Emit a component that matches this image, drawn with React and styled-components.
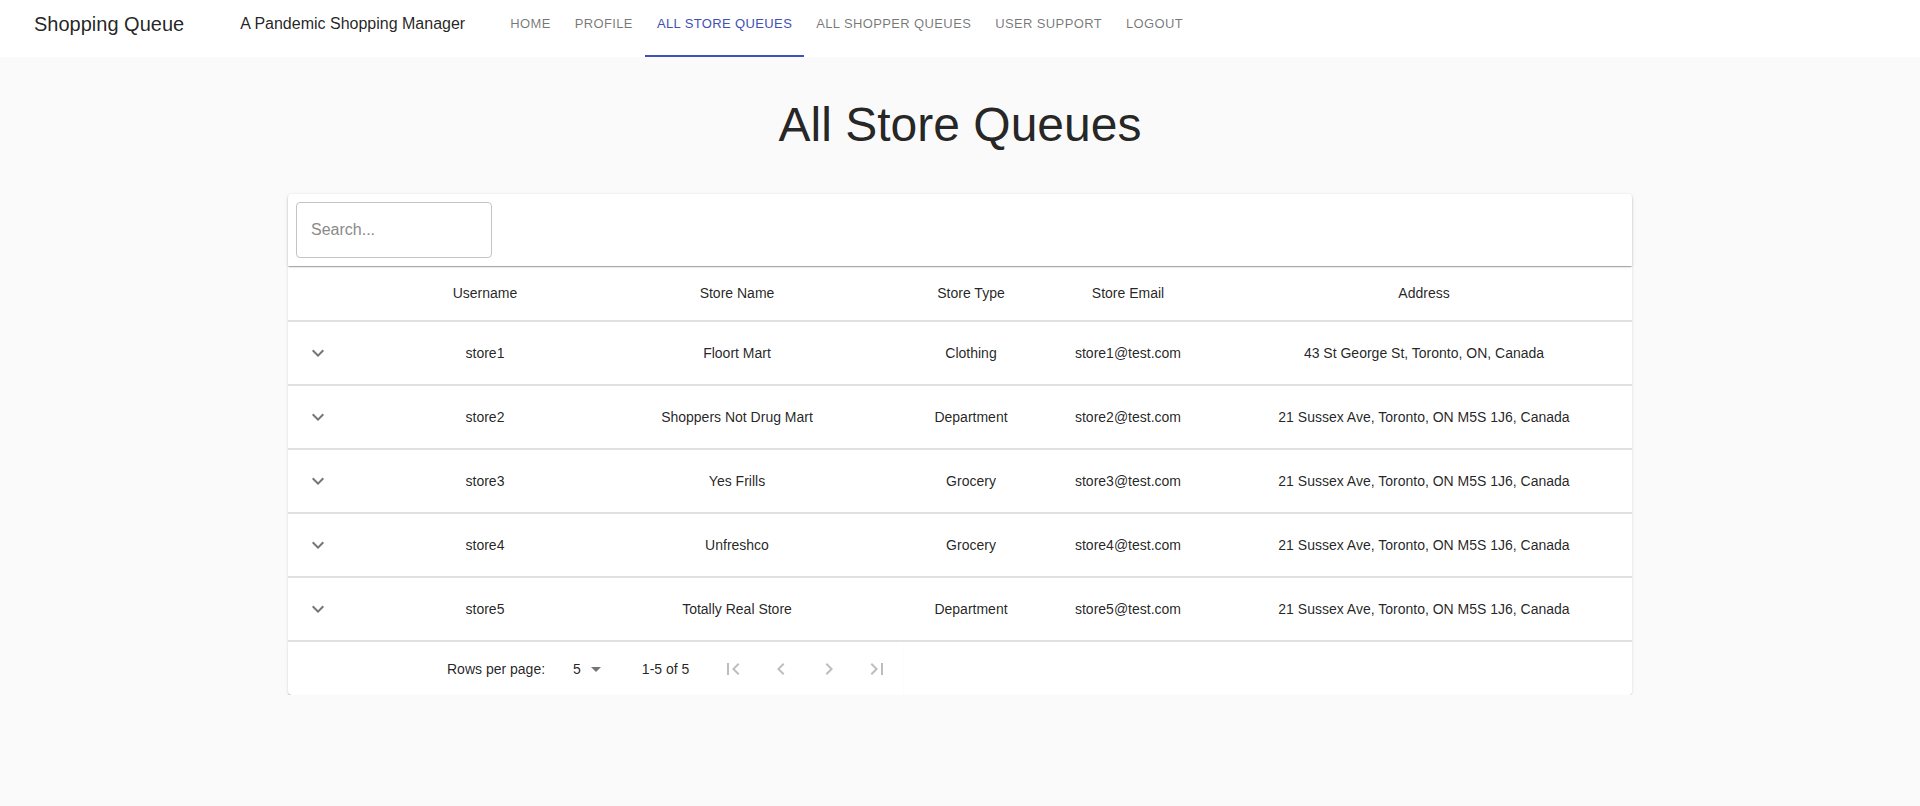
import React from 'react';
import styled, { createGlobalStyle, css } from 'styled-components';
import { MdExpandMore, MdFirstPage, MdChevronLeft, MdChevronRight, MdLastPage, MdArrowDropDown } from 'react-icons/md';

const GlobalStyle = createGlobalStyle`
  body {
    margin: 0;
    background: #fafafa;
    font-family: "Liberation Sans", Arial, sans-serif;
    color: rgba(0, 0, 0, 0.87);
  }
`;

const NavBar = styled.header`
  display: flex;
  align-items: flex-start;
  height: 57px;
  padding-left: 34px;
  background: #fff;
`;

const Brand = styled.div`
  font-size: 20px;
  line-height: 48px;
  margin-right: 56px;
`;

const Tagline = styled.div`
  font-size: 16px;
  line-height: 48px;
  margin-right: 33px;
`;

const Tabs = styled.nav`
  display: flex;
  height: 100%;
`;

const Tab = styled.div`
  padding: 0 12px;
  font-size: 13px;
  font-weight: 500;
  letter-spacing: 0.02857em;
  text-transform: uppercase;
  line-height: 48px;
  color: rgba(0, 0, 0, 0.54);
  cursor: pointer;
  ${(p) =>
    p.$active &&
    css`
      color: #3f51b5;
      box-shadow: inset 0 -2px 0 #3f51b5;
    `}
`;

const Main = styled.main`
  padding-top: 40px;
`;

const Title = styled.h1`
  margin: 0 0 41px;
  font-size: 48px;
  font-weight: 400;
  line-height: 56px;
  text-align: center;
`;

const Card = styled.section`
  width: 1344px;
  margin: 0 auto;
  background: #fff;
  border-radius: 4px;
  box-shadow: 0 1px 3px rgba(0, 0, 0, 0.12), 0 1px 1px rgba(0, 0, 0, 0.06);
`;

const Toolbar = styled.div`
  position: relative;
  z-index: 1;
  display: flex;
  align-items: center;
  height: 72px;
  padding: 0 8px;
  box-sizing: border-box;
  border-radius: 4px 4px 0 0;
  box-shadow: 0 2px 1px -1px rgba(0, 0, 0, 0.2), 0 1px 1px 0 rgba(0, 0, 0, 0.14), 0 1px 3px 0 rgba(0, 0, 0, 0.12);
`;

const Search = styled.input`
  width: 196px;
  height: 56px;
  box-sizing: border-box;
  padding: 0 14px;
  border: 1px solid #c4c4c4;
  border-radius: 4px;
  font: inherit;
  font-size: 16px;
  outline: none;
  &::placeholder {
    color: #8a8a8a;
  }
`;

const Row = styled.div`
  display: grid;
  grid-template-columns: 60px 274px 230px 238px 76px 1fr;
  align-items: center;
  height: ${(p) => (p.$head ? 56 : 64)}px;
  box-sizing: border-box;
  border-bottom: 2px solid #e0e0e0;
  font-size: 14px;
  font-weight: ${(p) => (p.$head ? 500 : 400)};
`;

const Cell = styled.div`
  display: flex;
  justify-content: center;
  white-space: nowrap;
  padding-left: ${(p) => p.$shift || 0}px;
`;

const ExpandIcon = styled(MdExpandMore)`
  font-size: 24px;
  color: rgba(0, 0, 0, 0.54);
`;

const Footer = styled.div`
  display: flex;
  height: 53px;
`;

const Pager = styled.div`
  display: flex;
  align-items: center;
  width: 615px;
  padding-left: 159px;
  box-sizing: border-box;
  font-size: 14px;
  border-radius: 0 0 0 4px;
  box-shadow: 0 2px 2px -1px rgba(0, 0, 0, 0.28);
`;

const Select = styled.div`
  display: flex;
  align-items: center;
  margin-left: 28px;
  svg {
    margin-left: 3px;
    font-size: 24px;
    color: rgba(0, 0, 0, 0.54);
  }
`;

const Count = styled.span`
  margin-left: 34px;
`;

const Nav = styled.div`
  display: flex;
  margin-left: 20px;
`;

const IconButton = styled.button`
  display: flex;
  align-items: center;
  justify-content: center;
  width: 48px;
  height: 48px;
  padding: 0;
  border: 0;
  background: none;
  font-size: 24px;
  color: rgba(0, 0, 0, 0.26);
`;

const tabs = ['Home', 'Profile', 'All Store Queues', 'All Shopper Queues', 'User Support', 'Logout'];

const stores = [
  ['store1', 'Floort Mart', 'Clothing', 'store1@test.com', '43 St George St, Toronto, ON, Canada'],
  ['store2', 'Shoppers Not Drug Mart', 'Department', 'store2@test.com', '21 Sussex Ave, Toronto, ON M5S 1J6, Canada'],
  ['store3', 'Yes Frills', 'Grocery', 'store3@test.com', '21 Sussex Ave, Toronto, ON M5S 1J6, Canada'],
  ['store4', 'Unfreshco', 'Grocery', 'store4@test.com', '21 Sussex Ave, Toronto, ON M5S 1J6, Canada'],
  ['store5', 'Totally Real Store', 'Department', 'store5@test.com', '21 Sussex Ave, Toronto, ON M5S 1J6, Canada'],
];

const headers = ['Username', 'Store Name', 'Store Type', 'Store Email', 'Address'];

const App = () => (
  <>
    <GlobalStyle />
    <NavBar>
      <Brand>Shopping Queue</Brand>
      <Tagline>A Pandemic Shopping Manager</Tagline>
      <Tabs>
        {tabs.map((t) => (
          <Tab key={t} $active={t === 'All Store Queues'}>
            {t}
          </Tab>
        ))}
      </Tabs>
    </NavBar>

    <Main>
      <Title>All Store Queues</Title>
      <Card>
        <Toolbar>
          <Search placeholder="Search..." />
        </Toolbar>

        <Row $head>
          <Cell />
          {headers.map((h, i) => (
            <Cell key={h} $shift={i === 4 ? 50 : 0}>
              {h}
            </Cell>
          ))}
        </Row>

        {stores.map((s) => (
          <Row key={s[0]}>
            <Cell>
              <ExpandIcon />
            </Cell>
            {s.map((v, i) => (
              <Cell key={i} $shift={i === 4 ? 50 : 0}>
                {v}
              </Cell>
            ))}
          </Row>
        ))}

        <Footer>
          <Pager>
            <span>Rows per page:</span>
            <Select>
              5
              <MdArrowDropDown />
            </Select>
            <Count>1-5 of 5</Count>
            <Nav>
              <IconButton><MdFirstPage /></IconButton>
              <IconButton><MdChevronLeft /></IconButton>
              <IconButton><MdChevronRight /></IconButton>
              <IconButton><MdLastPage /></IconButton>
            </Nav>
          </Pager>
        </Footer>
      </Card>
    </Main>
  </>
);

export default App;
